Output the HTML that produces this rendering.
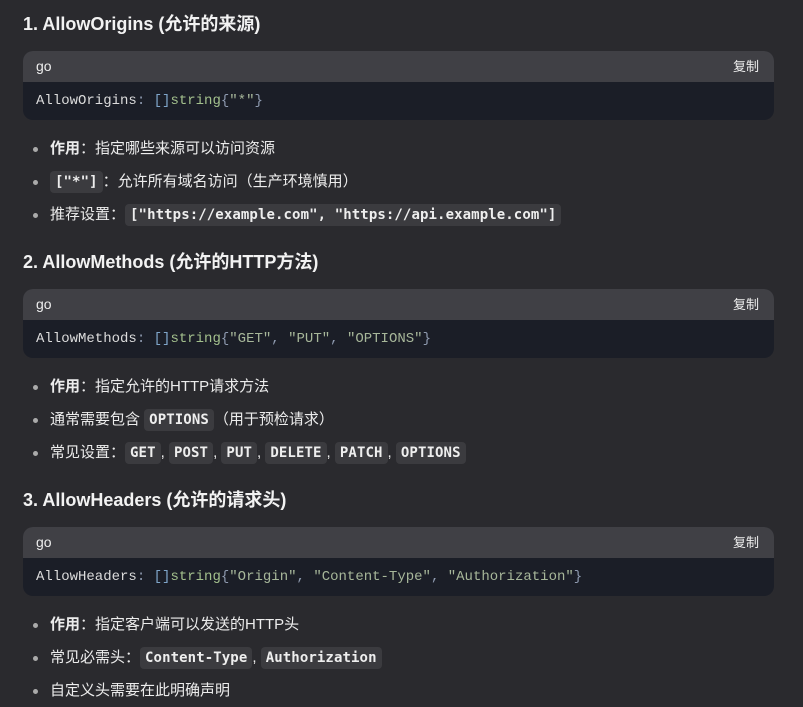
<!DOCTYPE html>
<html><head><meta charset="utf-8"><style>
body{margin:0;background:#2a2a2e;width:803px;height:704px;overflow:hidden;font-family:"Liberation Sans","Noto Sans CJK SC",sans-serif;color:#ececec;}
.h{position:absolute;left:23px;font-size:18px;font-weight:bold;color:#f2f2f2;line-height:24px}
.card{position:absolute;left:23px;width:751px;height:69px;border-radius:10px;overflow:hidden;background:#1b1e27}
.bar{height:31px;background:#404045;font-size:14px;line-height:31px;padding:0 13px;color:#eee;position:relative}
.bar span{position:absolute;right:15px;top:0;font-size:13px}
.code{font-family:"Liberation Mono","DejaVu Sans Mono",monospace;font-size:14px;padding:0 13px;line-height:38px;color:#dcdcdc}
.p{color:#8f9bb0}.b{color:#7fa5c9}.s{color:#a3c08d}.q{color:#a7b79a}
ul{position:absolute;left:23px;margin:0;padding:0;list-style:none;width:770px}
li{position:relative;padding-left:27px;height:33px;line-height:33px;font-size:15px;white-space:nowrap}
li:before{content:"";position:absolute;left:10px;top:15px;width:5px;height:5px;border-radius:50%;background:#aaa}
code{font-family:"DejaVu Sans Mono","Liberation Mono",monospace;font-weight:bold;font-size:14px;background:#3b3b3f;border-radius:4px;padding:3px 5px;color:#eee;letter-spacing:0.1px}
</style></head><body>
<div class="h" style="top:12px">1. AllowOrigins (允许的来源)</div>
<div class="card" style="top:51px"><div class="bar">go<span>复制</span></div><div class="code">AllowOrigins<span class="p">: </span><span class="b">[]</span><span class="s">string</span><span class="p">{</span><span class="q">"*"</span><span class="p">}</span></div></div>
<ul style="top:132px"><li><b>作用</b>：指定哪些来源可以访问资源</li><li><code>["*"]</code>：允许所有域名访问（生产环境慎用）</li><li>推荐设置：<code>["https://example.com", "https://api.example.com"]</code></li></ul>
<div class="h" style="top:250px">2. AllowMethods (允许的HTTP方法)</div>
<div class="card" style="top:289px"><div class="bar">go<span>复制</span></div><div class="code">AllowMethods<span class="p">: </span><span class="b">[]</span><span class="s">string</span><span class="p">{</span><span class="q">"GET"</span><span class="p">, </span><span class="q">"PUT"</span><span class="p">, </span><span class="q">"OPTIONS"</span><span class="p">}</span></div></div>
<ul style="top:370px"><li><b>作用</b>：指定允许的HTTP请求方法</li><li>通常需要包含 <code>OPTIONS</code>（用于预检请求）</li><li>常见设置：<code>GET</code>, <code>POST</code>, <code>PUT</code>, <code>DELETE</code>, <code>PATCH</code>, <code>OPTIONS</code></li></ul>
<div class="h" style="top:488px">3. AllowHeaders (允许的请求头)</div>
<div class="card" style="top:527px"><div class="bar">go<span>复制</span></div><div class="code">AllowHeaders<span class="p">: </span><span class="b">[]</span><span class="s">string</span><span class="p">{</span><span class="q">"Origin"</span><span class="p">, </span><span class="q">"Content-Type"</span><span class="p">, </span><span class="q">"Authorization"</span><span class="p">}</span></div></div>
<ul style="top:608px"><li><b>作用</b>：指定客户端可以发送的HTTP头</li><li>常见必需头：<code>Content-Type</code>, <code>Authorization</code></li><li>自定义头需要在此明确声明</li></ul>
</body></html>
